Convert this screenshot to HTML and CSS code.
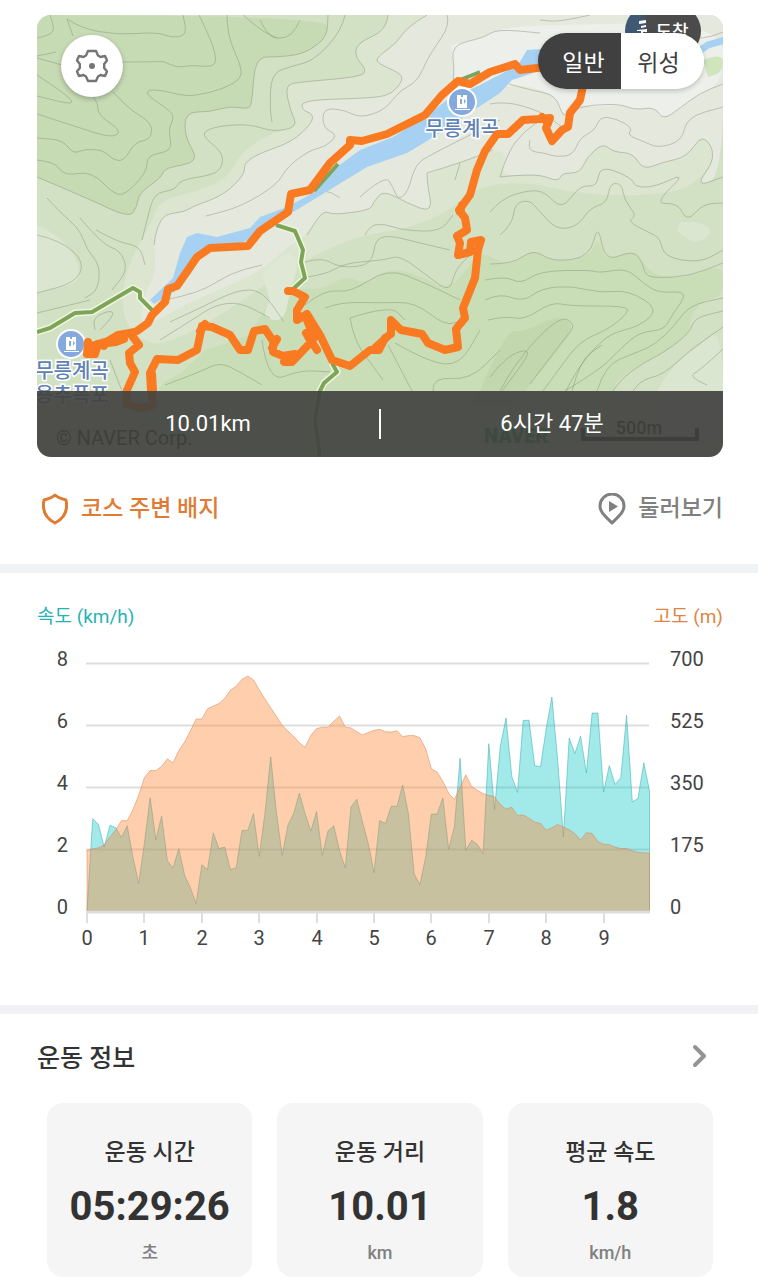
FILE: index.html
```html
<!DOCTYPE html>
<html lang="ko">
<head>
  <meta charset="UTF-8">
  <meta name="viewport" content="width=device-width, initial-scale=1.0">
  <title>운동 기록</title>
  <link rel="stylesheet" href="styles.css">
</head>
<body>
  <main>
    <section class="course">
      <div class="map">
        <svg class="map-canvas" viewBox="37 15 686 442" role="img" aria-label="코스 지도">
          <defs>
            <linearGradient id="finish-fill">
              <stop offset="0.2" stop-color="#3f5873"/>
              <stop offset="0.32" stop-color="#4b4b4b"/>
            </linearGradient>
          </defs>
          <rect x="37" y="15" width="686" height="442" fill="#d2e1c3"/>

          <!-- terrain -->
          <g class="terrain">
            <path fill="#c6dab4" d="M37 15L328 15 327 37 310 50 297 55 277 57 255 57 252 105 247 109 230 106 210 112 185 112 185 138 200 162 164 168 162 177 139 193 137 207 129 218 87 198 37 177"/>
            <path fill="#dbe5cf" d="M388 15L387 30 357 43 355 57 367 70 360 77 300 82 285 85 290 110 298 127 273 132 244 150 235 165 224 180 194 192 160 200 150 225 130 260 120 300 130 335 170 350 330 240 433 225 490 175 610 200 723 185 723 15"/>
            <path fill="#e5e9dd" d="M427 15L407 27 397 43 377 57 377 63 400 73 403 80 393 93 377 98 302 100 302 110 313 114 312 123 292 142 260 153 244 163 245 174 224 195 194 206 184 212 165 214 157 227 154 245 156 275 143 295 140 330 163 317 190 302 230 285 262 270 290 245 307 235 323 210 333 215 370 210 373 203 383 190 407 203 433 213 427 183 427 173 460 163 493 150 507 153 500 177 537 173 558 182 562 173 580 173 587 157 603 143 613 152 633 153 643 170 663 162 687 157 703 133 717 157 695 187 723 177 723 15"/>
            <path fill="#ecefea" d="M451 45L483 38 497 29 540 25 723 22 723 82 700 93 680 108 663 120 655 107 635 110 620 104 590 108 570 100 563 118 556 95 520 84 500 88 452 90 455 72 451 45"/>
            <path fill="#c9ddb7" d="M250 335L262 310 285 288 322 290 347 275 365 285 388 268 420 275 450 292 480 250 500 262 513 264 533 249 553 262 590 257 598 237 605 262 633 250 643 263 657 277 690 277 723 263 723 297 703 300 690 317 690 333 663 353 643 363 617 380 613 391 613 457 150 457 155 385 180 375 205 350"/>
            <path fill="#c2d7ae" d="M480 391L505 330 525 332 558 315 575 326 560 348 533 380 515 405 470 405"/>
            <path fill="#dbe6d0" d="M657 391L670 368 700 345 723 327 723 457 650 457M677 230L690 243 705 240 712 230 700 222 680 222M37 225L60 235 80 265 78 285 37 292"/>
            <path fill="#dfe8d5" d="M262 275L285 248 300 262 290 290 284 322 262 318 270 300"/>
            <path fill="#cfe5bb" d="M703 60L723 52 723 72 708 77"/>
          </g>

          <!-- contour lines -->
          <g class="contours">
            <path d="M50 15L55 28 50 35 37 38M67 19L80 28 117 35 157 32 172 38 187 35 183 15M67 19L73 36M120 62L150 62 165 61 176 68 191 65 210 67 217 62 212 42 199 15M227 15L227 35 242 68 240 80 220 90 198 95 185 96 160 90 147 90 148 96 165 107 175 116 168 130 173 151 147 155 147 172 126 194 115 195 91 171 65 176 55 163 37 160"/>
            <path d="M37 56L56 52M37 58L62 65M37 75L60 90 78 106 37 96M37 114L80 128 112 138 122 131 98 115 98 103 92 96M113 92L130 110 145 118 153 128 149 140 135 142 124 161 113 160 103 150 85 149 73 154 63 140 37 138"/>
            <path d="M37 177L87 198 129 218 137 207 139 193 162 177 164 168 200 162 185 138 185 112 210 112 230 106 247 109 252 105 255 57 277 57 297 55 310 50 327 37 328 15"/>
            <path d="M345 15L342 30 315 60 293 66 271 73 270 110 272 122M388 15L387 30 357 43 355 57 367 70 360 77 300 82 285 85 290 110 298 127 273 132 250 124 218 126 203 132 206 139 223 153 222 168 212 175 180 180 175 190 154 193 147 220 142 240"/>
            <path d="M427 15L407 27 397 43 377 57 377 63 400 73 403 80 393 93 377 98 302 100 302 110 313 114 312 123 292 142 260 153 244 163 245 174 224 195 194 206 184 212 165 214 157 227 154 245M447 15L450 25 433 50 427 60 417 82 400 90 385 110 360 118 345 110 323 108 323 128 338 135 325 147 310 150 287 167 277 185 240 207 206 216"/>
            <path d="M723 32L700 42 670 30M590 15L560 22 540 20M452 90L455 72 451 45 483 38 497 29 540 33M260 20L268 36 280 39 292 35 300 20M243 15L260 30 277 38M490 104L505 101 540 111 558 124 563 128M509 84L530 90 556 95 563 118 572 110 590 105 620 104 635 110 655 107 663 120 680 108 700 93 723 84"/>
            <path d="M530 140L527 151 545 153 556 157 573 155 580 138 595 130 600 117 615 118 633 128 627 135 645 142 658 148 682 141 687 117 723 107M500 177L507 153 525 130 545 118M500 177L537 173 558 182 562 173 580 173 587 157 603 143 613 152 633 153 643 170 663 162 687 157 703 133 717 157 695 187 723 177"/>
            <path d="M490 212L502 198 530 190 545 192 562 210 580 185 597 187 600 165 632 178 635 187 655 187 687 172 654 204 678 203 687 222 703 204 723 203M500 235L512 225 515 203 530 200 540 212 557 230 578 226 590 208 607 203 610 183 622 184 624 200 637 216 627 221 650 233 660 238 664 257 700 263 723 250"/>
            <path d="M490 264L513 264 533 249 553 262 590 257 598 223 605 262 633 250 643 263 645 275 657 278 690 276 723 263M485 280L505 276 521 284 540 271 590 270 600 273 627 268 645 285 660 293 689 291 672 315 664 330 640 332 622 347 603 367 565 391"/>
            <path d="M485 300L500 293 523 302 542 288 573 286 600 293 628 290 659 309 640 326 612 333 595 347 577 370 566 391M488 320L505 316 524 320 552 302 570 306 625 306 629 312 609 329 580 341 559 369 543 391M500 391L515 362 560 315 576 325 565 338 530 384M490 377L507 355 533 348 515 374 502 391"/>
            <path d="M597 391L605 365 635 353 655 345 675 325 690 305 723 298M613 391L620 380 643 363 663 353 690 333 694 318 723 311M633 391L640 380 663 375 690 350 723 327M707 385L688 377 700 370 723 349M572 391L580 360 602 345"/>
            <path d="M427 173L427 183 433 213 407 203 383 190 373 203 370 210 333 215 323 210 307 235M427 173L460 163 493 150M340 198L323 185 300 207M360 197L385 175 393 187 398 200 408 192 415 165 430 155 500 120M365 235L370 225 385 224 402 230 440 232 453 215M455 180L460 163"/>
            <path d="M305 262L322 257 340 268 372 265 375 240 388 235 420 243 450 250M300 278L325 275 345 263 385 260 400 255 430 278 450 292 455 270 470 255M305 305L325 289 350 293 388 268 425 283 460 300M325 308L340 302 382 303 415 302 445 326 463 320M350 318L390 305 405 320M350 318L354 340 372 365 383 380M388 345L412 391M395 343L430 363 460 365 480 330M433 391L432 377 470 380 500 350"/>
            <path d="M37 235L60 240 85 262 75 283 37 293M47 198L60 212 80 230 87 250 100 265 98 290 85 298M80 218L103 245 120 250 128 270 112 290M96 230L117 242 140 246 145 265M165 300L200 293 230 273 262 265M170 322L200 308 237 290 262 290 284 322M160 340L195 318 215 305 240 302 270 318M165 385L200 372 220 362 240 372 262 385M100 330L115 315 110 310 93 318 95 330M37 313L70 305 90 300M110 360L122 391M262 340L268 383 300 370 330 372"/>
          </g>

          <!-- stream -->
          <path fill="#a6d1f2" d="M542 49L527 50 518 65 480 85 447 100 425 117 393 137 360 150 337 167 313 193 287 207 260 217 250 228 217 237 197 233 187 237 180 253 173 278 150 300 154 304 174 292 190 275 203 254 243 242 260 236 293 212 313 200 367 167 407 153 427 141 500 93 512 80 542 70Z"/>
          <path fill="none" stroke="#a6d1f2" stroke-width="7" d="M698 52L708 45 725 40"/>

          <!-- trails -->
          <g fill="none" stroke-linejoin="round">
            <path stroke="#eef8dc" stroke-width="7" d="M37 332L50 328 75 313 92 312 133 288 140 292 140 298 152 310M276 225L295 231 303 250 301 262 305 278 292 290M332 363L337 372 324 383 320 391 315 420 320 457"/>
            <path stroke="#7ea45a" stroke-width="4" d="M37 332L50 328 75 313 92 312 133 288 140 292 140 298 152 310M276 225L295 231 303 250 301 262 305 278 292 290M332 363L337 372 324 383 320 391 315 420 320 457M460 80L480 72M314 191L338 164"/>
          </g>

          <!-- places -->
          <g class="place">
            <circle cx="462" cy="102" r="14" fill="#84a9dc" stroke="#fff" stroke-width="2"/>
            <path fill="#fff" d="M457 95h4v2h2v-2h4v13h-10zM455 109h15v1h-15z"/>
            <path fill="#84a9dc" d="M460 99h2v5h-2zM464 99l2 2-2 3z"/>
            <text x="462" y="136">무릉계곡</text>
            <circle cx="71" cy="344" r="14" fill="#84a9dc" stroke="#fff" stroke-width="2"/>
            <path fill="#fff" d="M66 337h4v2h2v-2h4v13h-10zM64 351h15v1h-15z"/>
            <path fill="#84a9dc" d="M69 341h2v5h-2zM73 341l2 2-2 3z"/>
            <text x="72" y="378">무릉계곡</text>
            <text x="72" y="402">용추폭포</text>
          </g>

          <!-- walked route -->
          <g fill="none" stroke="#fa7a22" stroke-width="8" stroke-linejoin="round" stroke-linecap="round">
            <path d="M545 67L520 70 515 64 490 72 470 84 458 81 442 95 425 115 387 134 362 141 350 140 350 145 330 163 310 190 291 194 288 212 260 231 248 246 210 248 197 257 177 286 168 289 165 302 152 315 148 323 137 331 130 333 118 335 108 341 88 347"/>
            <path d="M88 342L87 354 95 354 98 344 104 346M108 343L116 342 124 339M130 333L139 345 129 353 130 363 135 372 127 390 126 404 140 408 153 405 151 390 150 373 157 359 178 360 197 350 202 326 212 327 230 335 240 350 248 350 254 331 265 329 273 341 273 352 283 356 295 354 284 362 292 362 311 342 306 333 317 350M277 339L272 348"/>
            <path d="M288 291L293 291 305 297 297 310 297 320 307 314 320 335 332 360 350 366 370 350 379 350 385 338 391 334 391 320 401 330 422 334 428 343 445 350 458 347 456 329 465 318 463 308 475 278 478 250 481 240 471 242 470 252 458 255 460 243 457 236 467 230 465 218 459 210 470 195 477 170 485 151 497 134 508 134 523 120 540 119 550 118 546 128 552 141 562 130 568 127 570 113 580 100 583 86"/>
            <path d="M375 348L386 338M462 205L460 212M542 117L548 123M205 324L200 331M307 320L314 338M152 374L153 390"/>
          </g>

          <!-- finish marker -->
          <rect x="625" y="5" width="76" height="52" rx="26" fill="url(#finish-fill)"/>
          <path fill="#fff" d="M639 21l7-1v3l-7 1zM641 26l5-1v2l-5 1zM637 30l10-1v3h-4v3h-5v-2h3v-2h-4z"/>
          <text class="finish" x="672" y="38">도착</text>

          <text class="copyright" x="56" y="445">© NAVER Corp.</text>
          <text class="naver" x="484" y="443">NAVER</text>
          <text class="scale" x="639" y="434">500m</text>
          <path fill="none" stroke="#111" stroke-width="4" d="M583 428V439H697V428"/>
        </svg>

        <button class="settings" type="button" aria-label="지도 설정">
          <svg width="34" height="34" viewBox="-17 -17 34 34" fill="none" stroke="#757575" stroke-width="2.4" stroke-linejoin="round">
            <path d="M-4-15H4L6-10.5 8.5-9 13-10 15-5.5 12.2-2V2L15 5.5 13 10 8.5 9 6 10.5 4 15H-4L-6 10.5-8.5 9-13 10-15 5.5-12.2 2V-2L-15-5.5-13-10-8.5-9-6-10.5Z"/>
            <circle r="3" fill="#757575" stroke="none"/>
          </svg>
        </button>

        <div class="map-type">
          <button class="active" type="button">일반</button>
          <button type="button">위성</button>
        </div>

        <div class="summary">
          <span>10.01km</span>
          <span>6시간 47분</span>
        </div>
      </div>

      <nav class="course-links">
        <a class="badge-link" href="#badges">
          <svg width="28" height="32" viewBox="0 0 28 32" fill="none" stroke="currentColor" stroke-width="3" stroke-linejoin="round">
            <path d="M14 2C11 5 7 6 3 7C1 17 4 25 14 30C24 25 27 17 25 7C21 6 17 5 14 2Z"/>
          </svg>
          코스 주변 배지
        </a>
        <a class="tour-link" href="#tour">
          <svg width="28" height="32" viewBox="0 0 28 32" fill="none" stroke="currentColor" stroke-width="3" stroke-linejoin="round">
            <path d="M14 30C7 23 2 19 2 13A12 12 0 0 1 26 13C26 19 21 23 14 30Z"/>
            <path d="M11 8L20 13.500 11 19Z" fill="currentColor" stroke="none"/>
          </svg>
          둘러보기
        </a>
      </nav>
    </section>

    <section class="chart">
      <div class="chart-head">
        <span class="speed-label">속도 (km/h)</span>
        <span class="altitude-label">고도 (m)</span>
      </div>
      <svg class="chart-canvas" viewBox="37 643 686 312" role="img" aria-label="속도와 고도 그래프">
        <path class="grid" d="M86 663.5H649M86 725.5H649M86 787.500H649M86 849.500H649"/>
        <path id="speed" class="speed-area"/>
        <path id="altitude" class="altitude-area"/>
        <path class="axis" d="M86 912H650"/>
        <g id="ticks" class="ticks"></g>
        <g class="left-axis">
          <text x="68" y="666">8</text>
          <text x="68" y="728">6</text>
          <text x="68" y="790">4</text>
          <text x="68" y="852">2</text>
          <text x="68" y="914">0</text>
        </g>
        <g class="right-axis">
          <text x="670" y="666">700</text>
          <text x="670" y="728">525</text>
          <text x="670" y="790">350</text>
          <text x="670" y="852">175</text>
          <text x="670" y="914">0</text>
        </g>
      </svg>
    </section>

    <section class="info">
      <div class="info-head">
        <h2>운동 정보</h2>
        <a href="#detail" aria-label="운동 정보 더보기">
          <svg width="16" height="24" viewBox="0 0 16 24" fill="none" stroke="#949494" stroke-width="4" stroke-linecap="round" stroke-linejoin="round">
            <path d="M4 3L13 12 4 21"/>
          </svg>
        </a>
      </div>
      <div class="cards">
        <div class="card">
          <h3>운동 시간</h3>
          <strong>05:29:26</strong>
          <span>초</span>
        </div>
        <div class="card">
          <h3>운동 거리</h3>
          <strong>10.01</strong>
          <span>km</span>
        </div>
        <div class="card">
          <h3>평균 속도</h3>
          <strong>1.8</strong>
          <span>km/h</span>
        </div>
      </div>
    </section>
  </main>

  <script>
    // one value per 100 m
    const speed = [
      0, 2.99, 2.8, 2.07, 2.78, 2.7, 2.38, 2.76, 1.75, 0.89,
      2.2, 3.67, 2.31, 3.07, 1.62, 1.4, 2.02, 1.16, 0.76, 0.24,
      1.5, 1.34, 2.53, 2.02, 2.07, 1.34, 1.4, 2.61, 2.61, 3.15,
      1.77, 3.15, 4.99, 3.2, 1.8, 2.78, 3.15, 3.82, 3.15, 2.59,
      3.22, 1.8, 2.6, 2.76, 1.94, 1.4, 3.37, 3.62, 2.88, 2.18,
      1.24, 2.93, 2.83, 3.39, 3.39, 4.08, 3.15, 1.2, 0.85, 1.75,
      3.14, 3.14, 3.66, 2.0, 2.72, 4.95, 1.97, 2.29, 2.16, 1.86,
      5.42, 3.29, 5.33, 6.25, 4.36, 3.84, 6.17, 6.18, 4.71, 4.67,
      5.9, 6.93, 4.88, 2.4, 5.6, 5.1, 5.66, 4.47, 6.41, 6.41,
      3.86, 4.71, 4.1, 4.32, 6.34, 3.53, 3.65, 4.8, 3.89
    ];
    const altitude = [
      172, 176, 179, 187, 210, 230, 256, 256, 287, 328,
      378, 398, 398, 410, 431, 420, 455, 479, 510, 544,
      544, 573, 581, 588, 603, 626, 637, 657, 666, 655,
      627, 601, 576, 552, 526, 510, 495, 477, 464, 498,
      517, 521, 521, 538, 553, 521, 519, 508, 499, 506,
      512, 515, 508, 507, 511, 494, 497, 497, 491, 460,
      403, 394, 367, 334, 316, 351, 386, 353, 342, 333,
      328, 324, 302, 289, 294, 271, 272, 263, 252, 248,
      229, 236, 245, 238, 230, 219, 201, 222, 220, 197,
      189, 188, 181, 177, 177, 171, 166, 165, 164
    ];

    const left = 87;
    const bottom = 911;
    const height = 247;
    const kmWidth = 57.4;

    function areaPath(values, max) {
      const points = values.map(function(v, i) {
        return (left + i * kmWidth / 10).toFixed(1) + ' ' + (bottom - v / max * height).toFixed(1);
      });
      const right = left + (values.length - 1) * kmWidth / 10;
      return 'M' + left + ' ' + bottom + 'L' + points.join('L') + 'L' + right.toFixed(1) + ' ' + bottom + 'Z';
    }

    // round the corners of a polyline: curve through the middle of each side
    function smoothLine(line) {
      const n = line.match(/[\d.]+/g).map(Number);
      let d = 'M' + n[0] + ' ' + n[1];
      for (let i = 2; i < n.length - 2; i += 2) {
        const mx = (n[i] + n[i + 2]) / 2;
        const my = (n[i + 1] + n[i + 3]) / 2;
        d += 'Q' + n[i] + ' ' + n[i + 1] + ' ' + mx + ' ' + my;
      }
      return d + 'L' + n[n.length - 2] + ' ' + n[n.length - 1];
    }

    document.querySelectorAll('.contours path, .terrain path').forEach(function(path) {
      const lines = path.getAttribute('d').split('M').slice(1);
      path.setAttribute('d', lines.map(smoothLine).join(''));
    });

    document.getElementById('speed').setAttribute('d', areaPath(speed, 8));
    document.getElementById('altitude').setAttribute('d', areaPath(altitude, 700));

    let ticks = '';
    for (let km = 0; km < 10; km++) {
      const x = Math.round(left + km * kmWidth);
      ticks += '<path d="M' + x + ' 912V923"/><text x="' + x + '" y="945">' + km + '</text>';
    }
    document.getElementById('ticks').innerHTML = ticks;
  </script>
</body>
</html>
```
FILE: styles.css
```css
* {
  box-sizing: border-box;
}
body {
  margin: 0;
  background-color: #fff;
  color: #333;
  font-family: Roboto, "Noto Sans CJK KR", sans-serif;
}
h2, h3 {
  margin: 0;
  font-weight: 500;
}
a {
  color: inherit;
  text-decoration: none;
}
button {
  border: none;
  padding: 0;
  font-family: inherit;
  cursor: pointer;
}
svg {
  display: block;
}

/* map */
.course {
  padding: 15px 35px 0 37px;
}
.map {
  position: relative;
  border-radius: 14px;
  overflow: hidden;
}
.map-canvas {
  width: 100%;
}
.contours {
  fill: none;
  stroke: rgba(130,145,120,0.45);
}
.place text {
  fill: #5f82b6;
  font-size: 20px;
  font-weight: 500;
  text-anchor: middle;
  stroke: #fff;
  stroke-width: 3px;
  paint-order: stroke;
}
.finish {
  fill: #fff;
  font-size: 18px;
  font-weight: 500;
  text-anchor: middle;
}
.copyright {
  fill: #111;
  font-size: 20px;
}
.naver {
  fill: #00a050;
  font-size: 20px;
  font-weight: 900;
}
.scale {
  fill: #111;
  font-size: 18px;
  font-weight: 500;
  text-anchor: middle;
}
.settings {
  position: absolute;
  top: 20px;
  left: 24px;
  display: flex;
  align-items: center;
  justify-content: center;
  width: 62px;
  height: 62px;
  border-radius: 50%;
  background-color: #fff;
  box-shadow: 0 2px 5px rgba(0,0,0,0.25);
}
.map-type {
  position: absolute;
  top: 18px;
  right: 19px;
  display: flex;
  height: 56px;
  border-radius: 28px;
  overflow: hidden;
  box-shadow: 0 2px 5px rgba(0,0,0,0.2);
}
.map-type button {
  width: 83px;
  padding: 0 8px 0 16px;
  background-color: #fff;
  color: #404040;
  font-size: 23px;
}
.map-type button + button {
  padding: 0 16px 0 8px;
}
.map-type .active {
  background-color: #404040;
  color: #fff;
}
.summary {
  position: absolute;
  left: 0;
  right: 0;
  bottom: 0;
  display: flex;
  align-items: center;
  height: 66px;
  background-color: rgba(66,66,64,0.92);
  color: #fff;
  font-size: 22px;
}
.summary span {
  flex: 1;
  line-height: 30px;
  text-align: center;
}
.summary span + span {
  border-left: 2px solid #fff;
}

.course-links {
  display: flex;
  justify-content: space-between;
  align-items: center;
  height: 107px;
  padding-left: 4px;
  font-size: 23px;
  font-weight: 500;
  line-height: 32px;
}
.course-links a {
  display: flex;
  align-items: center;
  gap: 12px;
  padding-bottom: 4px;
}
.badge-link {
  color: #e17b34;
}
.tour-link {
  color: #808080;
}

/* chart */
.chart {
  border-top: 9px solid #eff3f5;
  padding: 28px 35px 50px 37px;
}
.chart-head {
  display: flex;
  justify-content: space-between;
  font-size: 19px;
  line-height: 32px;
  margin-bottom: 10px;
}
.speed-label {
  color: #27b3b3;
}
.altitude-label {
  color: #df8543;
}
.chart-canvas {
  width: 100%;
}
.chart-canvas text {
  fill: #444;
  font-size: 20px;
}
.speed-area {
  fill: rgba(22,200,202,0.4);
  stroke: rgba(50,170,175,0.5);
}
.altitude-area {
  fill: rgba(255,133,48,0.4);
  stroke: rgba(220,130,80,0.5);
}
.grid {
  stroke: #dedede;
  stroke-width: 2;
}
.axis {
  stroke: #dedede;
  stroke-width: 3;
}
.ticks path {
  stroke: #dedede;
  stroke-width: 2;
}
.ticks text {
  text-anchor: middle;
}
.left-axis text {
  text-anchor: end;
}

/* workout info */
.info {
  border-top: 9px solid #f1f1f6;
  padding: 22px 35px 3px 37px;
}
.info-head {
  display: flex;
  justify-content: space-between;
  align-items: center;
  height: 40px;
  padding-right: 16px;
}
.info-head h2 {
  font-size: 25px;
}
.cards {
  display: grid;
  grid-template-columns: repeat(3, 1fr);
  gap: 25px;
  padding: 27px 10px 0;
}
.card {
  display: flex;
  flex-direction: column;
  align-items: center;
  padding: 34px 0 12px;
  border-radius: 16px;
  background-color: #f5f5f5;
}
.card h3 {
  font-size: 23px;
  line-height: 32px;
}
.card strong {
  font-size: 40px;
  line-height: 48px;
  margin: 14px 0 10px;
}
.card span {
  color: #808080;
  font-size: 18px;
  font-weight: 500;
  line-height: 24px;
}
```
